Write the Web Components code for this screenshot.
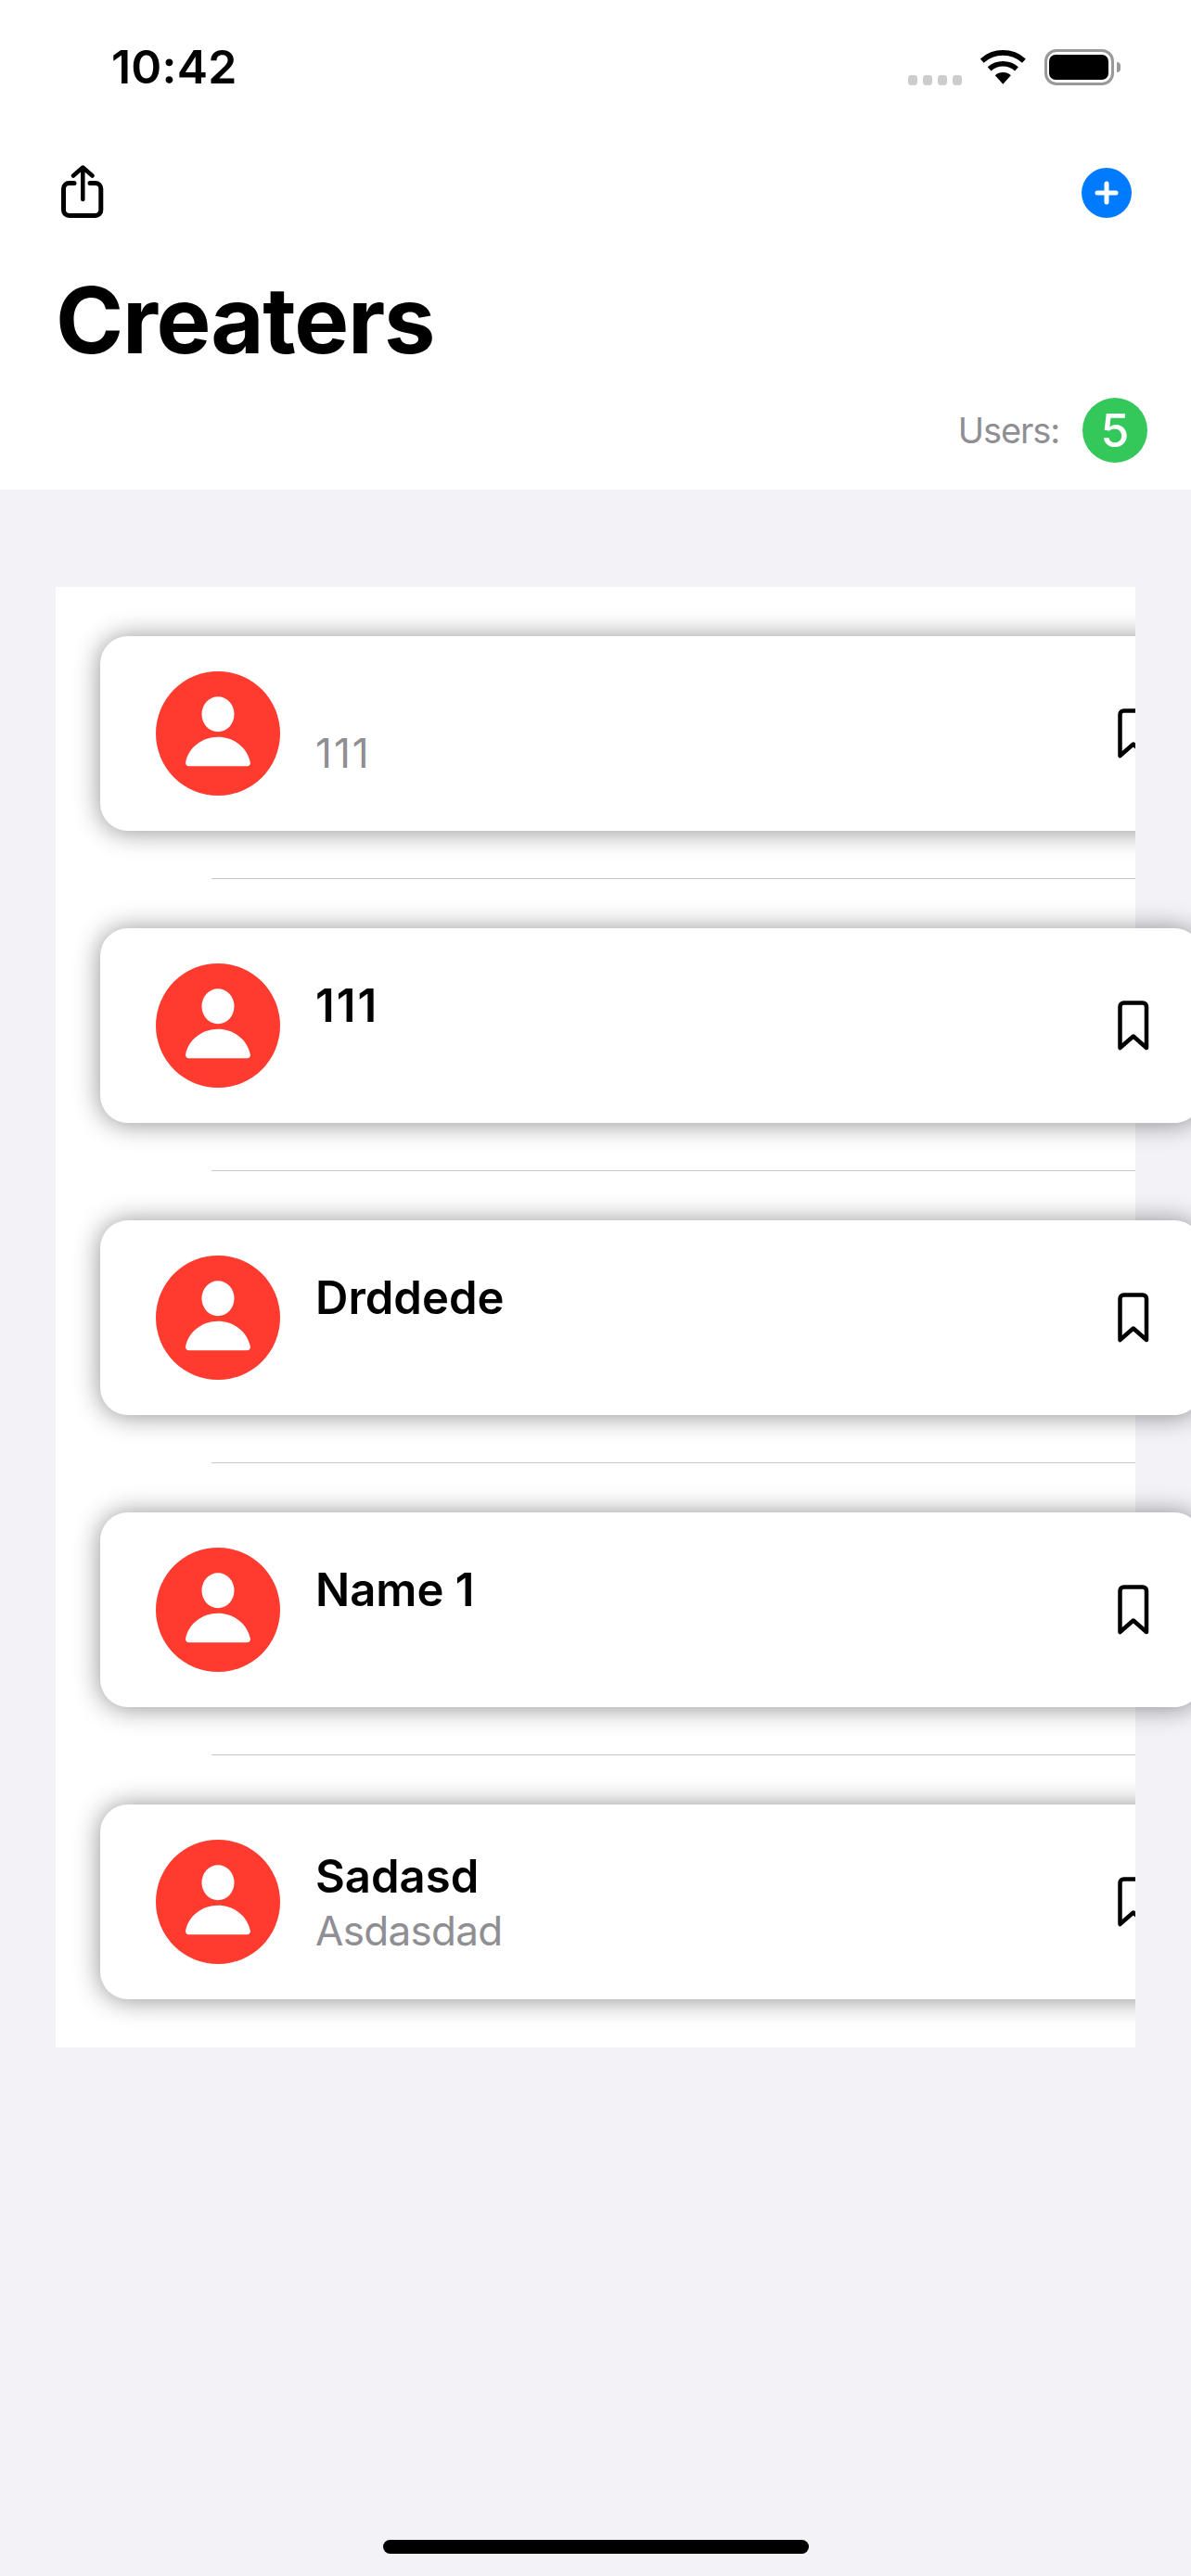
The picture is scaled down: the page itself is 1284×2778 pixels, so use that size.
<!doctype html>
<html>
<head>
<meta charset="utf-8">
<title>Creaters</title>
<style>
html, body {
  margin: 0;
  background: #f2f2f7;
}
body {
  width: 1284px;
  height: 2778px;
  overflow: hidden;
  font-family: Inter, "Liberation Sans", sans-serif;
}
/* Inter's 1 is narrower than the reference's */
.digits {
  letter-spacing: 2px;
}
</style>
</head>
<body>
<app-screen>
  <status-bar time="10:42"></status-bar>
  <nav-header title="Creaters" count="5"></nav-header>
  <user-list>
    <user-row layout="sub" clip><span slot="sub" class="digits">111</span></user-row>
    <user-row layout="name"><span slot="name" class="digits">111</span></user-row>
    <user-row layout="name"><span slot="name">Drddede</span></user-row>
    <user-row layout="name"><span slot="name">Name 1</span></user-row>
    <user-row layout="both" clip last><span slot="name">Sadasd</span><span slot="sub">Asdasdad</span></user-row>
  </user-list>
</app-screen>

<script>
/**
 * Page frame: stacks everything and keeps the home indicator at the bottom.
 */
class AppScreen extends HTMLElement {
  constructor() {
    super();
    const root = this.attachShadow({mode: 'open'});
    root.innerHTML = `
<style>
:host {
  display: flex;
  flex-direction: column;
  width: 1284px;
  height: 2778px;
}
.home {
  flex: none;
  width: 459px;
  height: 15px;
  margin: auto auto 24px;
  border-radius: 8px;
  background: #000;
}
</style>
<slot></slot>
<div class="home"></div>
    `;
  }
}

class StatusBar extends HTMLElement {
  constructor() {
    super();
    const root = this.attachShadow({mode: 'open'});
    root.innerHTML = `
<style>
:host {
  display: flex;
  flex: none;
  align-items: flex-start;
  justify-content: space-between;
  box-sizing: border-box;
  height: 178px;
  padding: 53px 76px 0 120px;
  background: #fff;
}
#time {
  font-size: 50px;
  font-weight: 600;
  line-height: 39px;
  letter-spacing: 0.2px;
  color: #000;
}
.icons {
  display: flex;
  align-items: flex-start;
}
.dots {
  display: flex;
  gap: 6px;
  margin: 28px 19px 0 0;
}
.dots i {
  width: 10px;
  height: 10.5px;
  border-radius: 3.5px;
  background: #ccc;
}
svg {
  display: block;
  margin: 1px 19px 0 0;
}
.battery {
  box-sizing: border-box;
  width: 75px;
  height: 38.5px;
  padding: 2.5px;
  border: 3px solid #999;
  border-radius: 13px;
}
.battery div {
  height: 100%;
  border-radius: 7px;
  background: #000;
}
.nub {
  width: 4.5px;
  height: 11px;
  margin: 13.5px 0 0 3px;
  border-radius: 0 4px 4px 0;
  background: #999;
}
</style>
<div id="time"></div>
<div class="icons">
  <div class="dots"><i></i><i></i><i></i><i></i></div>
  <svg width="51" height="37" viewBox="0 0 51 37">
    <path d="M2.7 11.6A33.8 33.8 0 0 1 47.9 11.6M10.6 20.4A22 22 0 0 1 40 20.4" fill="none" stroke="#000" stroke-width="5.7"/>
    <path d="M16.8 27.3A12.7 12.7 0 0 1 33.8 27.3L25.3 36.7Z" fill="#000"/>
  </svg>
  <div class="battery"><div></div></div>
  <div class="nub"></div>
</div>
    `;
    root.getElementById('time').textContent = this.getAttribute('time');
  }
}

class NavHeader extends HTMLElement {
  constructor() {
    super();
    const root = this.attachShadow({mode: 'open'});
    root.innerHTML = `
<style>
:host {
  display: flex;
  flex: none;
  flex-direction: column;
  box-sizing: border-box;
  height: 350px;
  background: #fff;
}
.bar {
  display: flex;
  align-items: flex-start;
  justify-content: space-between;
  height: 122px;
  padding: 0 64px 0 66px;
}
.plus {
  display: block;
  margin-top: 3px;
}
h1 {
  margin: 0;
  padding-left: 60px;
  font-size: 99px;
  font-weight: 700;
  line-height: 90px;
  letter-spacing: -1.3px;
  color: #000;
}
.users {
  display: flex;
  align-items: center;
  justify-content: flex-end;
  gap: 25px;
  margin-top: 39px;
  padding-right: 47px;
  font-size: 38px;
  letter-spacing: -1.1px;
  color: #8e8e93;
}
.badge {
  display: flex;
  align-items: center;
  justify-content: center;
  width: 70px;
  height: 70px;
  border-radius: 50%;
  background: #34c759;
  font-size: 50px;
  font-weight: 500;
  letter-spacing: 0;
  color: #fff;
}
</style>
<div class="bar">
  <svg width="46" height="58" viewBox="0 0 46 58" fill="none" stroke="#000" stroke-linecap="round" stroke-linejoin="round">
    <path stroke-width="5" d="M14 19.5H8.5a6 6 0 0 0-6 6V48.5a6 6 0 0 0 6 6H36.8a6 6 0 0 0 6-6V25.5a6 6 0 0 0-6-6H31"/>
    <path stroke-width="4.5" d="M23.3 37V3M13 11.5L23.3 2.5L33.5 11.5"/>
  </svg>
  <svg class="plus" width="54" height="54" viewBox="0 0 54 54">
    <circle cx="27" cy="27" r="27" fill="#007aff"/>
    <path d="M27 17V37M17 27H37" stroke="#fff" stroke-width="5" stroke-linecap="round"/>
  </svg>
</div>
<h1 id="title"></h1>
<div class="users"><span>Users:</span><div class="badge" id="count"></div></div>
    `;
    root.getElementById('title').textContent = this.getAttribute('title');
    root.getElementById('count').textContent = this.getAttribute('count');
  }
}

class UserList extends HTMLElement {
  constructor() {
    super();
    const root = this.attachShadow({mode: 'open'});
    root.innerHTML = `
<style>
:host {
  display: block;
  flex: none;
  width: 1164px;
  margin: 105px 0 0 60px;
  background: #fff;
}
</style>
<slot></slot>
    `;
  }
}

/**
 * One list row. The card is wider than the list, so only the first and last
 * rows ('clip') get cut off at the list's right edge.
 */
class UserRow extends HTMLElement {
  constructor() {
    super();
    const root = this.attachShadow({mode: 'open'});
    root.innerHTML = `
<style>
:host {
  display: flex;
  flex-direction: column;
  align-items: flex-start;
  box-sizing: border-box;
  height: 315px;
  padding-top: 53px;
}
:host([clip]) {
  overflow: hidden;
}
.card {
  display: flex;
  flex: none;
  align-items: center;
  box-sizing: border-box;
  width: 1188px;
  height: 210px;
  margin-left: 48px;
  padding: 0 57px 0 60px;
  border-radius: 30px;
  background: #fff;
  box-shadow: 0 1px 28px rgba(0, 0, 0, 0.44);
}
.avatar {
  display: block;
  flex: none;
}
.text {
  display: flex;
  flex: 1;
  flex-direction: column;
  align-self: flex-start;
  margin-left: 38px;
}
:host([layout="both"]) .text {
  padding-top: 47px;
}
:host([layout="name"]) .text {
  padding-top: 53px;
}
:host([layout="sub"]) .text {
  padding-top: 99px;
}
.name {
  font-size: 49px;
  font-weight: 600;
  line-height: 62px;
  color: #000;
}
.sub {
  font-size: 44px;
  line-height: 54px;
  letter-spacing: -0.7px;
  color: #8e8e93;
}
.sep {
  flex: none;
  align-self: stretch;
  height: 1px;
  margin: auto 0 0 168px;
  background: #c6c6c8;
}
:host([last]) .sep {
  display: none;
}
</style>
<div class="card">
  <svg class="avatar" width="134" height="134" viewBox="0 0 134 134">
    <circle cx="67" cy="67" r="67" fill="#ff3b30"/>
    <ellipse cx="67" cy="46.2" rx="17.5" ry="19" fill="#fff"/>
    <path d="M35.5 102.2H98.5a3.4 3.4 0 0 0 3.4-4C98.6 82 84 70.8 67 70.8S35.4 82 32.1 98.2a3.4 3.4 0 0 0 3.4 4Z" fill="#fff"/>
  </svg>
  <div class="text">
    <div class="name"><slot name="name"></slot></div>
    <div class="sub"><slot name="sub"></slot></div>
  </div>
  <svg width="34" height="54" viewBox="0 0 34 54" fill="none" stroke="#000" stroke-width="4.5" stroke-linejoin="round">
    <path d="M2.5 51V6.5a4 4 0 0 1 4-4H27a4 4 0 0 1 4 4V51L16.8 38.5Z"/>
  </svg>
</div>
<div class="sep"></div>
    `;
  }
}

customElements.define('app-screen', AppScreen);
customElements.define('status-bar', StatusBar);
customElements.define('nav-header', NavHeader);
customElements.define('user-list', UserList);
customElements.define('user-row', UserRow);
</script>
</body>
</html>
